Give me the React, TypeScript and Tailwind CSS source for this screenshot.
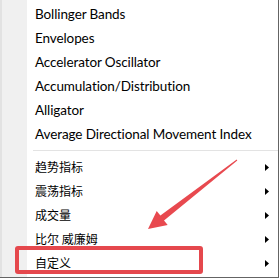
import React from 'react';

const indicators = [
  'Bollinger Bands',
  'Envelopes',
  'Accelerator Oscillator',
  'Accumulation/Distribution',
  'Alligator',
  'Average Directional Movement Index',
];

const groups = ['趋势指标', '震荡指标', '成交量', '比尔 威廉姆', '自定义'];

function SubArrow() {
  return (
    <svg width="4" height="7" viewBox="0 0 4 7" className="shrink-0">
      <path d="M0 0 L4 3.5 L0 7 Z" fill="#000" />
    </svg>
  );
}

function MenuRow({ label, cjk, sub }: { label: string; cjk?: boolean; sub?: boolean }) {
  return (
    <div className="flex h-[24px] items-center pl-[8px] pr-[9px]">
      <span
        className={
          cjk
            ? 'flex-1 whitespace-nowrap text-[12px] text-black [font-family:"Noto_Sans_CJK_SC",sans-serif]'
            : 'flex-1 whitespace-nowrap text-[13.5px] tracking-[-0.1px] text-black [font-family:Lato,sans-serif]'
        }
      >
        {label}
      </span>
      {sub && <SubArrow />}
    </div>
  );
}

export default function App() {
  return (
    <div className="relative h-[280px] w-[280px] overflow-hidden bg-white">
      <div className="flex h-[278px] w-[279px] border-b border-r border-[#646464]">
        <div className="w-[27px] shrink-0 border-l-2 border-[#e2e2e2] bg-[#f0f0f0]" />
        <div className="flex flex-1 flex-col bg-white pt-[2px]">
          {indicators.map((name) => (
            <MenuRow key={name} label={name} />
          ))}
          <div className="py-[4px] pl-[6px]">
            <div className="h-px bg-[#e3e3e3]" />
          </div>
          {groups.map((g) => (
            <MenuRow key={g} label={g} cjk sub />
          ))}
        </div>
      </div>

      {/* annotation drawn over the menu */}
      <div className="absolute left-[15px] top-[246px] h-[28px] w-[188px] rounded-[3px] border-[4px] border-[#e5484d]" />
      <svg className="absolute left-0 top-0" width="280" height="280" viewBox="0 0 280 280">
        <polygon
          points="148,229 156.7,210.9 160.4,215.6 236.7,159.6 237.3,160.4 164,220.4 167.7,225.1"
          fill="#e8494f"
        />
      </svg>
    </div>
  );
}
